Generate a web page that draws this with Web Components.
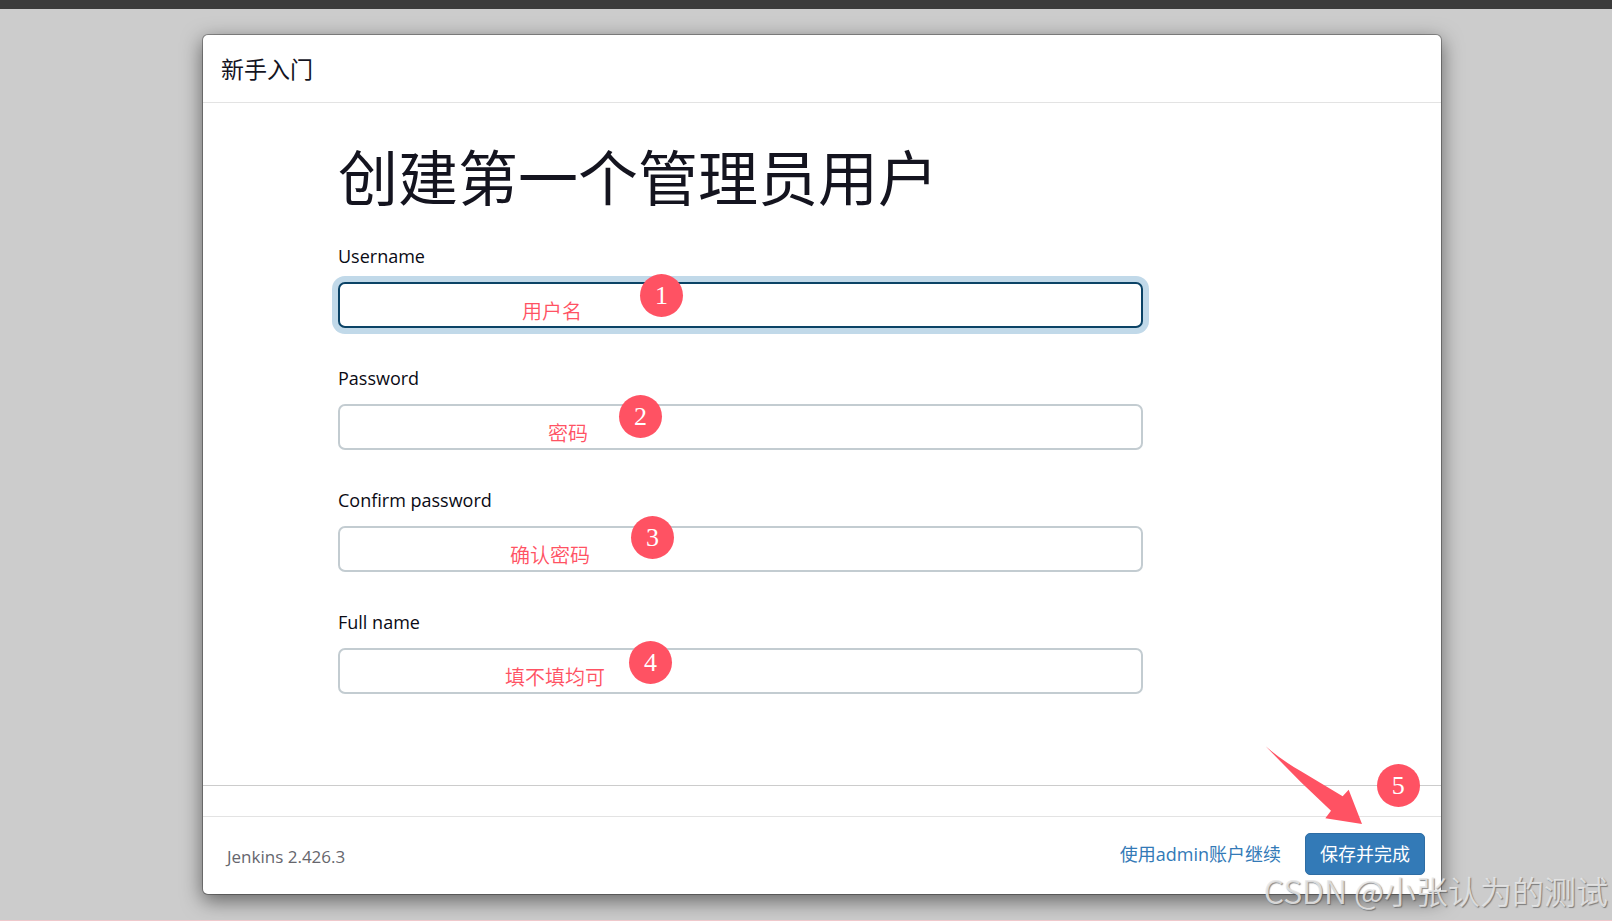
<!DOCTYPE html>
<html lang="zh-CN">
<head>
<meta charset="utf-8">
<title>新手入门</title>
<style>
  html, body { margin: 0; }
  body { font-family: "Open Sans", "Noto Sans CJK SC", sans-serif; color: #14141f; }
</style>
</head>
<body>
<setup-page>
  <setup-dialog heading="新手入门" version="Jenkins 2.426.3">
    <admin-form>
      <form-field label="Username" name="username" active>
        <field-note style="--x:184px;--y:15px">用户名</field-note>
        <step-badge style="--x:302px;--y:-8px">1</step-badge>
      </form-field>
      <form-field label="Password" name="password" type="password">
        <field-note style="--x:210px;--y:15px">密码</field-note>
        <step-badge style="--x:281px;--y:-9px">2</step-badge>
      </form-field>
      <form-field label="Confirm password" name="confirm" type="password">
        <field-note style="--x:172px;--y:15px">确认密码</field-note>
        <step-badge style="--x:293px;--y:-10px">3</step-badge>
      </form-field>
      <form-field label="Full name" name="fullname">
        <field-note style="--x:167px;--y:15px">填不填均可</field-note>
        <step-badge style="--x:291px;--y:-7px">4</step-badge>
      </form-field>
    </admin-form>
    <dialog-actions slot="actions">
      <pointer-arrow></pointer-arrow>
      <step-badge style="--x:257px;--y:-69px">5</step-badge>
    </dialog-actions>
  </setup-dialog>
  <page-watermark slot="mark">CSDN @小张认为的测试</page-watermark>
</setup-page>
<script>
const define = (name, render) => customElements.define(name, class extends HTMLElement {
  constructor() {
    super();
    this.attachShadow({ mode: 'open' });
  }
  connectedCallback() {
    this.shadowRoot.innerHTML = render(this);
  }
});

define('setup-page', () => `
  <style>
    :host { display: flex; flex-direction: column; min-height: 100vh; box-sizing: border-box;
      background: #ccc; border-top: 9px solid #3b3b3b; border-bottom: 1px solid #efc8cb;
      position: relative; overflow: hidden; }
    main { flex: 1; display: flex; padding: 25px 170px 25px 202px; }
  </style>
  <main><slot></slot></main>
  <slot name="mark"></slot>`);

define('setup-dialog', el => `
  <style>
    :host { flex: 1; display: flex; flex-direction: column; background: #fff; background-clip: padding-box;
      border: 1px solid rgba(0,0,0,.3); border-radius: 6px; box-shadow: 0 6px 20px rgba(0,0,0,.5); }
    header { padding: 18px 18px 16px; border-bottom: 1px solid #e3e3e3; }
    h4 { margin: 0; font-size: 23px; line-height: 33px; font-weight: 400; }
    section { flex: 1; border-bottom: 1px solid #ccc; }
    footer { margin-top: 30px; padding: 16px 16px 19px 24px; border-top: 1px solid #e3e3e3;
      display: flex; justify-content: space-between; align-items: center; }
    small { font-size: 17px; line-height: 24px; color: #66666d; padding-top: 6px; }
  </style>
  <header><h4>${el.getAttribute('heading')}</h4></header>
  <section><slot></slot></section>
  <footer><small>${el.getAttribute('version')}</small><slot name="actions"></slot></footer>`);

define('admin-form', () => `
  <style>
    :host { display: block; padding: 32px 135px 0; }
    h1 { margin: 0 0 27px; font-size: 60px; line-height: 80px; font-weight: 400; font-family: "Noto Sans CJK SC", sans-serif; }
    form { max-width: 805px; display: grid; gap: 36px; }
  </style>
  <h1>创建第一个管理员用户</h1>
  <form><slot></slot></form>`);

define('form-field', el => `
  <style>
    :host { display: block; }
    label { display: block; font-size: 18px; line-height: 28px; margin-bottom: 12px; color: #0a0a14; }
    div { position: relative; }
    input { display: block; box-sizing: border-box; width: 100%; height: 46px; padding: 0 12px;
      font: inherit; font-size: 18px; border: 2px solid #c3ccd1; border-radius: 7px; background: #fff; outline: 0; }
    :host([active]) input { border-color: #0b4366; box-shadow: 0 0 0 6px #c1d9e9; }
  </style>
  <label for="control">${el.getAttribute('label')}</label>
  <div>
    <input id="control" name="${el.getAttribute('name')}" type="${el.getAttribute('type') || 'text'}">
    <slot></slot>
  </div>`);

define('field-note', () => `
  <style>
    :host { position: absolute; left: var(--x); top: var(--y); pointer-events: none; white-space: nowrap;
      font: 350 20px/28px "Noto Sans CJK SC", sans-serif; color: #ff5263; }
  </style><slot></slot>`);

define('step-badge', () => `
  <style>
    :host { position: absolute; left: var(--x); top: var(--y); width: 43px; height: 43px; border-radius: 50%;
      background: #ff5263; color: #fff; text-align: center; pointer-events: none;
      font: 26px/43px "Liberation Serif", serif; }
  </style><slot></slot>`);

define('dialog-actions', () => `
  <style>
    :host { position: relative; display: flex; align-items: center; gap: 24px; }
    a { color: #337ab7; text-decoration: none; font-size: 18px; line-height: 26px; }
    button { box-sizing: border-box; height: 42px; padding: 0 14px; border: 1px solid #2e6da4; border-radius: 5px;
      background: #337ab7; color: #fff; font: inherit; font-size: 18px; line-height: 26px; }
  </style>
  <a href="#">使用admin账户继续</a>
  <button type="button">保存并完成</button>
  <slot></slot>`);

define('pointer-arrow', () => `
  <style>
    :host { position: absolute; right: 62px; top: -88px; pointer-events: none; }
    svg { display: block; width: 98px; height: 79px; }
  </style>
  <svg viewBox="0 0 294 237" aria-hidden="true"><path fill="#ff5263" d="M2 4 Q52 47 108 79 L233 154 L251 134 L291 237 L181 220 L198 197 L108 112Z"/></svg>`);

define('page-watermark', () => `
  <style>
    :host { position: absolute; right: 4px; bottom: 6px; pointer-events: none; white-space: nowrap;
      font: 350 32px/48px "Noto Sans CJK SC", sans-serif;
      color: rgba(232,232,232,.85); text-shadow: 1px 1px 1px rgba(90,90,90,.7); }
  </style><slot></slot>`);
</script>
</body>
</html>
